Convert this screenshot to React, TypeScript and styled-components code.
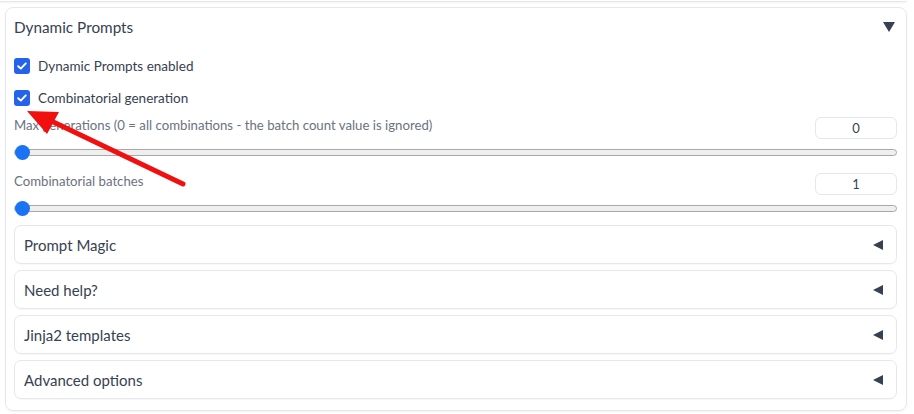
import React from 'react';
import styled, { createGlobalStyle } from 'styled-components';

const GlobalStyle = createGlobalStyle`
  html, body {
    margin: 0;
    padding: 0;
    background: #ffffff;
    font-family: Lato, "Noto Sans", sans-serif;
  }
`;

const Page = styled.div`
  position: relative;
  width: 914px;
  height: 414px;
  overflow: hidden;
  background: #ffffff;
`;

const TopEdge = styled.div`
  height: 1px;
  margin: 0 7px 0 0;
  border-bottom: 1px solid #e5e7eb;
  border-radius: 0 0 8px 0;
  box-shadow: 0 1px 2px rgba(0, 0, 0, 0.05);
`;

const Panel = styled.div`
  margin: 5px 7px 0 5px;
  height: 404px;
  box-sizing: border-box;
  border: 1px solid #e5e7eb;
  border-radius: 8px;
  padding: 0 9px 0 8px;
  box-shadow: 0 1px 2px rgba(0, 0, 0, 0.05);
`;

const Header = styled.div`
  display: flex;
  align-items: center;
  justify-content: space-between;
  height: 38px;
  color: #374151;
  font-size: 15.3px;
`;

const Caret = styled.span<{ $dir: 'down' | 'left' }>`
  width: 0;
  height: 0;
  ${({ $dir }) =>
    $dir === 'down'
      ? `border-left: 6px solid transparent;
         border-right: 6px solid transparent;
         border-top: 10px solid #374151;
         margin-right: 2px;`
      : `border-top: 5px solid transparent;
         border-bottom: 5px solid transparent;
         border-right: 10px solid #374151;
         margin-right: 4px;`}
`;

const CheckGroup = styled.div`
  padding-top: 4px;
`;

const CheckRow = styled.label`
  display: flex;
  align-items: center;
  gap: 8px;
  height: 32px;
  color: #374151;
  font-size: 13.5px;
`;

const Box = styled.span`
  display: flex;
  align-items: center;
  justify-content: center;
  width: 16px;
  height: 16px;
  border-radius: 3px;
  background: #2563eb;
`;

const SliderBlock = styled.div`
  padding-top: 3px;
  height: 56px;
  box-sizing: border-box;
`;

const LabelRow = styled.div`
  display: flex;
  justify-content: space-between;
  align-items: flex-start;
  height: 22px;
`;

const FieldLabel = styled.span`
  color: #6b7280;
  font-size: 13.2px;
  line-height: 16px;
`;

const NumberBox = styled.div`
  width: 82px;
  height: 22px;
  box-sizing: border-box;
  border: 1px solid #e5e7eb;
  border-radius: 6px;
  display: flex;
  align-items: center;
  justify-content: center;
  color: #374151;
  font-size: 13px;
`;

const Track = styled.div`
  position: relative;
  margin-top: 6px;
  height: 14px;
  display: flex;
  align-items: center;
`;

const Rail = styled.div`
  flex: 1;
  height: 7px;
  box-sizing: border-box;
  border: 1px solid #a8a8a8;
  border-radius: 4px;
  background: #efefef;
`;

const Thumb = styled.span`
  position: absolute;
  left: 1px;
  top: 0;
  width: 15px;
  height: 15px;
  border-radius: 50%;
  background: #1a73f5;
`;

const AccordionList = styled.div`
  display: flex;
  flex-direction: column;
  gap: 6px;
  margin-top: -1px;
`;

const Accordion = styled.div`
  height: 39px;
  box-sizing: border-box;
  border: 1px solid #e5e7eb;
  border-radius: 7px;
  padding: 0 9px;
  display: flex;
  align-items: center;
  justify-content: space-between;
  color: #374151;
  font-size: 15px;
  box-shadow: 0 1px 1px rgba(0, 0, 0, 0.03);
`;

const ArrowLayer = styled.svg`
  position: absolute;
  left: 0;
  top: 0;
  pointer-events: none;
`;

const Check = () => (
  <Box>
    <svg width="10" height="8" viewBox="0 0 10 8">
      <path d="M1.2 4.2 L3.8 6.6 L8.8 1.4" fill="none" stroke="#fff" strokeWidth="1.9" strokeLinecap="round" strokeLinejoin="round" />
    </svg>
  </Box>
);

const sliders = [
  { label: 'Max generations (0 = all combinations - the batch count value is ignored)', value: 0 },
  { label: 'Combinatorial batches', value: 1 },
];

const sections = ['Prompt Magic', 'Need help?', 'Jinja2 templates', 'Advanced options'];

export default function App() {
  return (
    <Page>
      <GlobalStyle />
      <TopEdge />
      <Panel>
        <Header>
          Dynamic Prompts
          <Caret $dir="down" />
        </Header>
        <CheckGroup>
          <CheckRow><Check />Dynamic Prompts enabled</CheckRow>
          <CheckRow><Check />Combinatorial generation</CheckRow>
        </CheckGroup>
        {sliders.map((s) => (
          <SliderBlock key={s.label}>
            <LabelRow>
              <FieldLabel>{s.label}</FieldLabel>
              <NumberBox>{s.value}</NumberBox>
            </LabelRow>
            <Track>
              <Rail />
              <Thumb />
            </Track>
          </SliderBlock>
        ))}
        <AccordionList>
          {sections.map((t) => (
            <Accordion key={t}>
              {t}
              <Caret $dir="left" />
            </Accordion>
          ))}
        </AccordionList>
      </Panel>
      <ArrowLayer width="914" height="414" viewBox="0 0 914 414">
        <line x1="183" y1="184" x2="45" y2="118" stroke="#f01010" strokeWidth="5" strokeLinecap="round" />
        <polygon points="27,111 59,112 47,134" fill="#f01010" />
      </ArrowLayer>
    </Page>
  );
}
